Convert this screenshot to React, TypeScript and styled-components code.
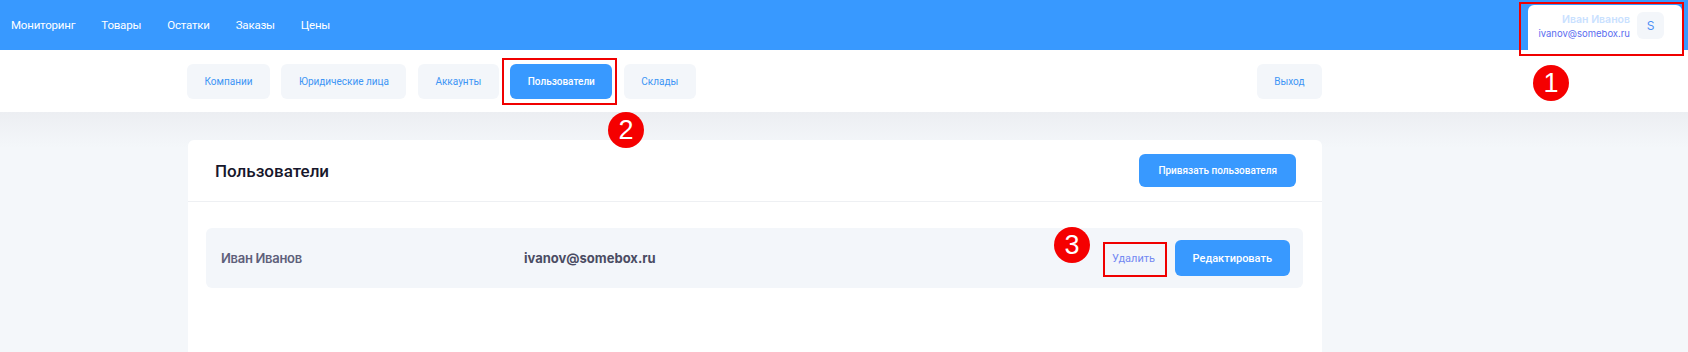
import React from 'react';
import styled, { createGlobalStyle } from 'styled-components';

const GlobalStyle = createGlobalStyle`
  body {
    margin: 0;
    font-family: Roboto, 'Liberation Sans', Arial, sans-serif;
    background: #f4f7fa;
  }
`;

const navItems = ['Мониторинг', 'Товары', 'Остатки', 'Заказы', 'Цены'];
const tabs = ['Компании', 'Юридические лица', 'Аккаунты', 'Пользователи', 'Склады'];

const users = [{ name: 'Иван Иванов', email: 'ivanov@somebox.ru' }];

const App: React.FC = () => {
  return (
    <Page>
      <GlobalStyle />
      <TopBar>
        <Nav>
          {navItems.map((item) => (
            <NavLink key={item}>{item}</NavLink>
          ))}
        </Nav>
        <UserCard>
          <UserInfo>
            <UserName>Иван Иванов</UserName>
            <UserEmail>ivanov@somebox.ru</UserEmail>
          </UserInfo>
          <Avatar>S</Avatar>
        </UserCard>
      </TopBar>

      <SubBar>
        <Tabs>
          {tabs.map((tab) => (
            <Tab key={tab} $active={tab === 'Пользователи'}>
              {tab}
            </Tab>
          ))}
          <Tab $pushRight>Выход</Tab>
        </Tabs>
      </SubBar>

      <Main>
        <Card>
          <CardHeader>
            <CardTitle>Пользователи</CardTitle>
            <PrimaryButton $small>Привязать пользователя</PrimaryButton>
          </CardHeader>
          <CardBody>
            {users.map((u) => (
              <UserRow key={u.email}>
                <RowName>{u.name}</RowName>
                <RowEmail>{u.email}</RowEmail>
                <RowActions>
                  <LinkButton>Удалить</LinkButton>
                  <PrimaryButton>Редактировать</PrimaryButton>
                </RowActions>
              </UserRow>
            ))}
          </CardBody>
        </Card>
      </Main>

      <Marker style={{ left: 1519, top: 2, width: 165, height: 54 }} />
      <Marker style={{ left: 502, top: 58, width: 115, height: 47 }} />
      <Marker style={{ left: 1103, top: 242, width: 64, height: 35 }} />
      <Badge style={{ left: 1533, top: 65 }}>1</Badge>
      <Badge style={{ left: 608, top: 112 }}>2</Badge>
      <Badge style={{ left: 1054, top: 227 }}>3</Badge>
    </Page>
  );
};

const Page = styled.div`
  position: relative;
  min-height: 352px;
  overflow: hidden;
`;

const TopBar = styled.header`
  height: 50px;
  background: #3899ff;
  display: flex;
  align-items: stretch;
  padding: 0 6px 0 11px;
`;

const Nav = styled.nav`
  display: flex;
  align-items: center;
  gap: 26px;
`;

const NavLink = styled.span`
  color: #ffffff;
  font-size: 11.5px;
  letter-spacing: -0.2px;
`;

const UserCard = styled.div`
  margin-left: auto;
  margin-top: 5px;
  width: 154px;
  box-sizing: border-box;
  background: #ffffff;
  border-radius: 6px 6px 0 0;
  display: flex;
  align-items: center;
  justify-content: flex-end;
  gap: 7px;
  padding: 0 18px 4px 0;
`;

const UserInfo = styled.div`
  display: flex;
  flex-direction: column;
  align-items: flex-end;
  gap: 2px;
`;

const UserName = styled.span`
  color: #c9e1ff;
  font-family: Inter, 'Liberation Sans', sans-serif;
  font-weight: 600;
  font-size: 10.5px;
`;

const UserEmail = styled.span`
  color: #5a6df0;
  font-family: Inter, 'Liberation Sans', sans-serif;
  font-size: 9.5px;
`;

const Avatar = styled.div`
  width: 27px;
  height: 27px;
  border-radius: 6px;
  background: #f3f6fa;
  color: #4d8ff5;
  font-family: Inter, 'Liberation Sans', sans-serif;
  font-size: 12px;
  display: flex;
  align-items: center;
  justify-content: center;
`;

const SubBar = styled.div`
  background: #ffffff;
  height: 62px;
  padding: 14px 0 0 187px;
  box-sizing: border-box;
`;

const Tabs = styled.div`
  width: 1135px;
  display: flex;
  gap: 11.5px;
`;

const Tab = styled.button<{ $active?: boolean; $pushRight?: boolean }>`
  height: 35px;
  padding: 0 17.5px;
  border: none;
  border-radius: 6px;
  background: ${(p) => (p.$active ? '#3899ff' : '#f3f6fa')};
  color: ${(p) => (p.$active ? '#ffffff' : '#3d95f5')};
  font-family: Roboto, 'Liberation Sans', sans-serif;
  font-size: 10px;
  font-weight: ${(p) => (p.$active ? 500 : 400)};
  margin-left: ${(p) => (p.$pushRight ? 'auto' : '0')};
  cursor: pointer;
`;

const Main = styled.main`
  background: linear-gradient(#eceef2 0px, #f4f7fa 36px);
  padding: 28px 0 0 188px;
`;

const Card = styled.section`
  width: 1134px;
  min-height: 240px;
  background: #ffffff;
  border-radius: 6px 6px 0 0;
`;

const CardHeader = styled.div`
  height: 62px;
  box-sizing: border-box;
  display: flex;
  align-items: center;
  justify-content: space-between;
  padding: 0 26px 0 27px;
  border-bottom: 1px solid #eef0f3;
`;

const CardTitle = styled.h2`
  margin: 0;
  font-family: Roboto, 'Liberation Sans', sans-serif;
  font-size: 17px;
  font-weight: 500;
  color: #17172b;
`;

const PrimaryButton = styled.button<{ $small?: boolean }>`
  height: ${(p) => (p.$small ? '33px' : '36px')};
  padding: 0 ${(p) => (p.$small ? '19px' : '18px')};
  border: none;
  border-radius: 6px;
  background: #3899ff;
  color: #ffffff;
  font-family: Roboto, 'Liberation Sans', sans-serif;
  font-size: ${(p) => (p.$small ? '10px' : '11px')};
  font-weight: 500;
  cursor: pointer;
`;

const CardBody = styled.div`
  padding: 26px 19px 0 18px;
`;

const UserRow = styled.div`
  height: 60px;
  background: #f3f6fa;
  border-radius: 6px;
  display: grid;
  grid-template-columns: 303px 1fr auto;
  align-items: center;
  padding: 0 13px 0 15px;
`;

const RowName = styled.span`
  font-family: Inter, 'Liberation Sans', sans-serif;
  font-weight: 600;
  font-size: 13px;
  color: #5e607a;
  letter-spacing: -0.3px;
`;

const RowEmail = styled.span`
  font-family: Inter, 'Liberation Sans', sans-serif;
  font-weight: 700;
  font-size: 13px;
  color: #4a4c63;
`;

const RowActions = styled.div`
  display: flex;
  align-items: center;
  gap: 9px;
`;

const LinkButton = styled.button`
  height: 35px;
  width: 64px;
  padding: 0;
  border: none;
  background: transparent;
  color: #7389f2;
  font-family: Roboto, 'Liberation Sans', sans-serif;
  font-size: 11px;
  cursor: pointer;
`;

const Marker = styled.div`
  position: absolute;
  box-sizing: border-box;
  border: 2px solid #f00000;
  pointer-events: none;
`;

const Badge = styled.div`
  position: absolute;
  width: 36px;
  height: 36px;
  border-radius: 50%;
  background: #f50000;
  color: #ffffff;
  font-family: 'Liberation Sans', Arial, sans-serif;
  font-size: 27px;
  line-height: 36px;
  text-align: center;
`;

export default App;
